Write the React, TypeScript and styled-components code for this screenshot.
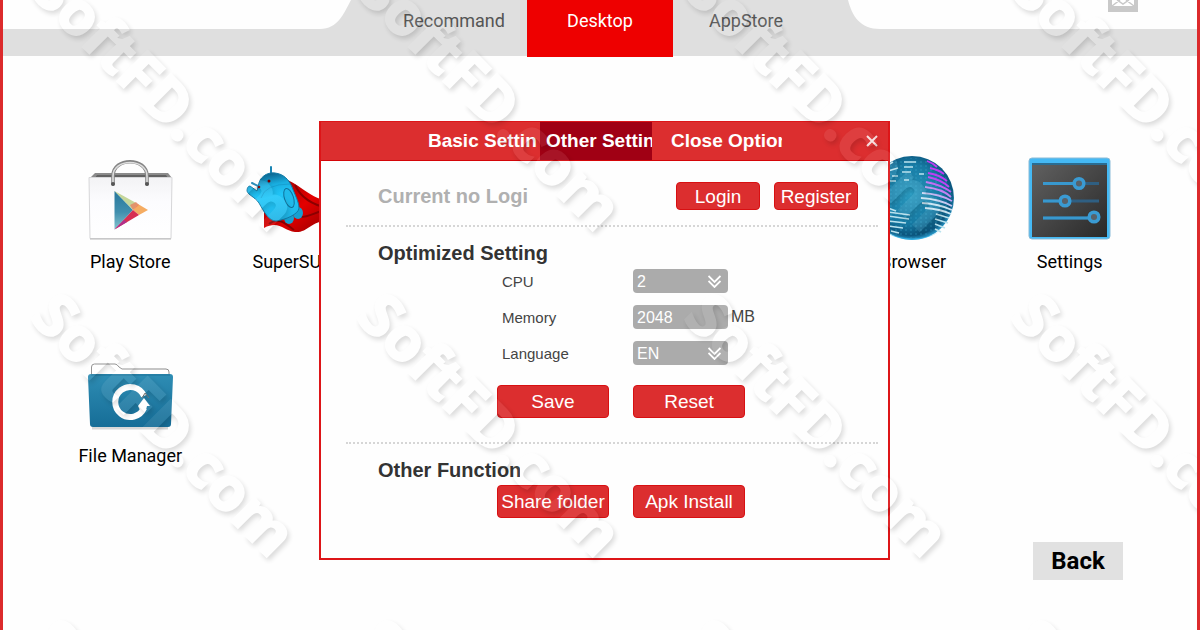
import React from "react";
import styled, { createGlobalStyle } from "styled-components";

const GlobalStyle = createGlobalStyle`
  *, *::before, *::after { box-sizing: border-box; }
  body { margin: 0; background: #fefefe; }
  button, input, select { font: inherit; }
`;

const Page = styled.div`
  position: relative;
  display: flex;
  flex-direction: column;
  min-height: 100vh;
  overflow: hidden;
  border: solid #dc2a2c;
  border-width: 0 3px;
  background: #fefefe;
  font-family: Roboto, "Liberation Sans", sans-serif;
  font-size: 18px;
  line-height: 24px;
  color: #000;
`;

const TopBar = styled.header`
  display: grid;
  grid-template-columns: 1fr auto 1fr;
  height: 56px;
  background: #dfdfdf;
`;

const SidePanel = styled.div<{ $end?: boolean }>`
  display: flex;
  flex-direction: ${(p) => (p.$end ? "row-reverse" : "row")};
  height: 29px;
  padding: ${(p) => (p.$end ? "0 0 0 29px" : "0 29px 0 0")};
`;

const PanelFill = styled.div`
  display: flex;
  flex: 1;
  justify-content: flex-end;
  padding-right: 59px;
  background: #fefefe;
`;

const MailButton = styled.button`
  width: 30px;
  height: 12px;
  padding: 0;
  border: 0;
  background: none;

  svg { display: block; }
`;

const Nav = styled.nav`
  display: flex;
`;

const NavLink = styled.a<{ $active?: boolean }>`
  width: 146px;
  height: 57px;
  padding-top: 9px;
  text-align: center;
  text-decoration: none;
  color: ${(p) => (p.$active ? "#fff" : "#555")};
  background: ${(p) => (p.$active ? "#ee0000" : "transparent")};
`;

const AppGrid = styled.main`
  display: grid;
  grid-template-columns: repeat(7, 1fr);
  grid-auto-rows: 170px;
  row-gap: 24px;
  padding: 100px 49px 0;
`;

const AppLink = styled.a<{ $column?: number }>`
  display: flex;
  flex-direction: column;
  align-items: center;
  grid-column: ${(p) => p.$column ?? "auto"};
  text-decoration: none;
  color: #000;

  svg { display: block; margin-bottom: 2px; }
`;

const BackButton = styled.button`
  align-self: flex-end;
  width: 90px;
  height: 38px;
  margin: auto 74px 50px 0;
  padding: 0;
  border: 0;
  background: #e1e1e1;
  font-size: 24px;
  font-weight: 700;
  color: #000;
`;

const Dialog = styled.section`
  position: absolute;
  top: 121px;
  left: 50%;
  width: 571px;
  margin-left: -281px;
  padding-bottom: 40px;
  border: 2px solid #dd1518;
  border-top-width: 1px;
  background: #fefefe;
  font-family: "Liberation Sans", Arial, sans-serif;
`;

const DialogBar = styled.div`
  display: flex;
  align-items: center;
  height: 39px;
  padding: 0 10px 0 107px;
  border-bottom: 1px solid #d40508;
  background: #dc2e2f;
`;

const DialogTab = styled.button<{ $active?: boolean; $wide?: boolean }>`
  width: ${(p) => (p.$wide ? 130 : 112)}px;
  height: 38px;
  padding: 0;
  border: 0;
  color: #fff;
  background: ${(p) => (p.$active ? "#a00014" : "transparent")};

  span {
    display: block;
    margin-left: ${(p) => (p.$wide ? 19 : p.$active ? 6 : 0)}px;
    overflow: hidden;
    white-space: nowrap;
    text-align: left;
    font-size: 19px;
    font-weight: 700;
  }
`;

const CloseButton = styled.button`
  display: flex;
  margin-left: auto;
  padding: 0;
  border: 0;
  background: none;
`;

const Section = styled.div<{ $ruled?: boolean }>`
  margin: 0 10px 0 25px;
  padding-left: 32px;
  border-bottom: ${(p) => (p.$ruled ? "2px dotted #d6d6d6" : "0")};
`;

const AccountRow = styled.div`
  display: flex;
  align-items: center;
  gap: 14px;
  height: 64px;
  padding: 6px 20px 0 0;
`;

const Heading = styled.h2<{ $muted?: boolean }>`
  flex: 1;
  margin: 0;
  font-size: 20px;
  font-weight: 700;
  line-height: 24px;
  color: ${(p) => (p.$muted ? "#b0b0b0" : "#333")};
`;

const ClippedHeading = styled(Heading)`
  width: 142px;
  overflow: hidden;
  white-space: nowrap;
`;

const RedButton = styled.button<{ $small?: boolean }>`
  width: ${(p) => (p.$small ? 84 : 112)}px;
  height: ${(p) => (p.$small ? 28 : 33)}px;
  padding: ${(p) => (p.$small ? "2px 0 0" : "0")};
  border: 1px solid #d81012;
  border-radius: 4px;
  background: #dc2e2f;
  font-size: 19px;
  line-height: 24px;
  white-space: nowrap;
  color: #fff;
`;

const Settings = styled.form`
  padding: 14px 0 24px;
`;

const Fields = styled.div`
  display: grid;
  gap: 12px;
  margin: 4px 0 20px 124px;
`;

const Field = styled.div`
  display: flex;
  align-items: center;
  height: 24px;
  font-size: 16px;
  color: #444;
`;

const FieldLabel = styled.label`
  width: 131px;
  padding-top: 2px;
  font-size: 15px;
`;

const SelectBox = styled.div`
  position: relative;

  svg {
    position: absolute;
    top: 6px;
    right: 10px;
    pointer-events: none;
  }
`;

const controlStyle = `
  display: block;
  width: 95px;
  height: 24px;
  margin: 0 3px 0 0;
  padding: 1px 4px 0;
  border: 0;
  border-radius: 4px;
  appearance: none;
  background: #ababab;
  color: #fff;
`;

const Select = styled.select`${controlStyle}`;
const TextInput = styled.input`${controlStyle}`;

const ButtonRow = styled.div`
  display: flex;
  gap: 24px;
  padding-left: 119px;
`;

const Functions = styled.div`
  padding: 14px 0 0;

  ${ButtonRow} { padding-top: 3px; }
`;

const WatermarkLayer = styled.svg`
  position: absolute;
  inset: 0;
  width: 100%;
  height: 100%;
  pointer-events: none;
  user-select: none;
  font-family: "Open Sans", "Noto Sans", sans-serif;
  font-size: 60px;
  font-weight: 700;
`;

function PlayStoreIcon() {
  return (
    <svg width="88" height="92" viewBox="-1 0 88 92" aria-hidden="true">
      <defs>
        <linearGradient id="bag" x1="0" y1="0" x2="0" y2="1">
          <stop offset="0" stopColor="#f3f3f5" /><stop offset=".4" stopColor="#fcfcfe" /><stop offset="1" stopColor="#fff" />
        </linearGradient>
        <linearGradient id="playBlue" x1="0" y1="0" x2="0" y2="1">
          <stop offset="0" stopColor="#27779c" /><stop offset=".55" stopColor="#418fae" /><stop offset="1" stopColor="#84c3cf" />
        </linearGradient>
      </defs>
      <path d="M8 17h73l4 5H3z" fill="#8b8b8b" />
      <path d="M10 19h69l2 3H8z" fill="#626262" />
      <path d="M2 21.500h83l-1 61H3z" fill="url(#bag)" stroke="#d7d7d9" />
      <path d="M3 83h81" stroke="#b9b9b9" />
      <path d="M26 28V20C26 1 60 1 60 20v8" fill="none" stroke="#858585" strokeWidth="3.600" strokeLinecap="round" />
      <path d="M26 27V20C26 2 60 2 60 20v7" fill="none" stroke="#dedede" strokeWidth="1.600" />
      <circle cx="26" cy="28" r="2" fill="#555" /><circle cx="60" cy="28" r="2" fill="#555" />
      <path d="M27.500 35v38.500L46 54z" fill="url(#playBlue)" />
      <path d="M27.500 35L51 48l-5 6z" fill="#c5d69a" />
      <path d="M51 48l10 6-9 5-6-5z" fill="#f5ac62" />
      <path d="M46 54l-3-5 6-3 3 3z" fill="#ed7658" opacity=".7" />
      <path d="M27.500 73.500L46 54l6 5z" fill="#d72f52" />
      <path d="M27.500 73.500L37 64l3 2z" fill="#b0308c" />
    </svg>
  );
}

function SuperSuIcon() {
  return (
    <svg width="88" height="92" viewBox="-4 1 88 92" aria-hidden="true">
      <defs>
        <linearGradient id="cape" x1="0" y1="0" x2="1" y2="1">
          <stop offset="0" stopColor="#8b0000" /><stop offset=".55" stopColor="#e40000" /><stop offset="1" stopColor="#930000" />
        </linearGradient>
        <linearGradient id="droid" x1=".4" y1="0" x2=".6" y2="1">
          <stop offset="0" stopColor="#0a5f89" /><stop offset=".25" stopColor="#19aee0" /><stop offset=".5" stopColor="#22c8fa" /><stop offset="1" stopColor="#1fb4e6" />
        </linearGradient>
      </defs>
      <path d="M36 24c14 2 24 18 45 22v20c-16-1-20 12-33 11-11-1-16-12-31-4V47z" fill="url(#cape)" />
      <path d="M48 30c6 13 18 20 33 23M52 62c10 1 19-7 29-7M22 69c9-8 17 0 25 6" fill="none" stroke="#8b0000" strokeWidth="2" />
      <ellipse cx="42" cy="63" rx="5" ry="6" fill="#17a0d0" /><ellipse cx="51" cy="58" rx="5" ry="6" fill="#17a0d0" />
      <path d="M24 12v8M5 28l8 4" stroke="#1984b3" strokeWidth="2" strokeLinecap="round" />
      <path d="M11 32C12 22 20 17 28 18c9 1 14 7 17 14 3 8 7 15 7 21 0 6-14 12-23 13-7 0-12-9-17-18C8 42 1 40 0 36c0-3 1-5 3-5l7 5z" fill="url(#droid)" stroke="#117aa6" />
      <path d="M14 43q4-14 29-14" fill="none" stroke="#138dbd" opacity=".5" />
      <ellipse cx="42" cy="43" rx="4.500" ry="10" transform="rotate(-18 42 43)" fill="#20baea" stroke="#11719a" />
      <circle cx="22" cy="26" r="1.500" fill="#700" /><circle cx="12" cy="32" r="1.300" fill="#700" />
    </svg>
  );
}

function BrowserIcon() {
  return (
    <svg width="88" height="92" viewBox="-1 0 88 92" aria-hidden="true">
      <defs>
        <radialGradient id="globe" cx=".48" cy=".45" r=".55">
          <stop offset="0" stopColor="#2b9bc1" /><stop offset=".65" stopColor="#1679a2" /><stop offset=".9" stopColor="#0b557d" /><stop offset="1" stopColor="#2b9bcb" />
        </radialGradient>
        <linearGradient id="land" gradientUnits="userSpaceOnUse" x1="60" y1="46" x2="74" y2="20">
          <stop offset=".1" stopColor="#c8e4f2" /><stop offset=".8" stopColor="#c03cf4" />
        </linearGradient>
        <pattern id="dots" width="5" height="4" patternUnits="userSpaceOnUse"><path d="M0 2h2" stroke="#39afd5" opacity=".45" /></pattern>
      </defs>
      <circle cx="42" cy="42" r="42" fill="url(#globe)" />
      <circle cx="42" cy="42" r="40" fill="url(#dots)" />
      <path d="M15 76q28 13 54 0-14 8-27 8t-27-8" fill="#36b6ed" opacity=".7" />
      <g fill="none" stroke="url(#land)" strokeWidth="1.800">
        <path d="M57 5q6 2 10 6M60 12q9 2 14 6M58 17q12 2 19 8M58 21q14 3 21 10M56 26q16 3 25 10M55 31q18 2 26 10" />
        <path d="M52 37q18 1 30 8M51 42q18 1 31 8M52 47q17 1 30 7M55 52q15 1 26 6" />
      </g>
      <g fill="none" stroke="#b9e2ee" strokeWidth="1.700">
        <path d="M66 58l13 4M65 63l13 4M65 68l10 4M65 73l6 3M18 15l10-3M34 11h9M32 16h9M22 20h6M17 25h9M34 24h5M16 10l7-4M49 18h5M34 6h12" />
        <path d="M18 52l8 3M18 56l22 3M18 60l21 3M18 65l18 2M18 70l15 2M21 75l8 2" />
      </g>
    </svg>
  );
}

function SettingsIcon() {
  return (
    <svg width="88" height="92" viewBox="0 0 88 92" aria-hidden="true">
      <defs>
        <linearGradient id="board" x1="0" y1="0" x2="1" y2="1">
          <stop offset="0" stopColor="#606060" /><stop offset=".5" stopColor="#454545" /><stop offset="1" stopColor="#292929" />
        </linearGradient>
      </defs>
      <rect x="3" y="2" width="81" height="81" rx="3" fill="#45b9f4" stroke="#8bbcd7" />
      <path d="M6 8h75v73H6z" fill="url(#board)" />
      <path d="M6 8h75" stroke="#2a6c91" strokeWidth="2" />
      <g strokeWidth="3">
        <path d="M17 27.500h56M17 45h56M17 62h56" stroke="#2f5f82" />
        <path d="M17 27.500h35M17 45h22M17 62h50" stroke="#3898ce" />
      </g>
      <g fill="#59626a" stroke="#3a9bd3" strokeWidth="3.500">
        <circle cx="53" cy="27.500" r="4.800" /><circle cx="39" cy="45" r="4.800" /><circle cx="68" cy="61" r="4.800" />
      </g>
    </svg>
  );
}

function FileManagerIcon() {
  return (
    <svg width="88" height="92" viewBox="-1 0 88 92" aria-hidden="true">
      <defs>
        <linearGradient id="folder" x1="0" y1="0" x2="0" y2="1">
          <stop offset="0" stopColor="#2e8db4" /><stop offset="1" stopColor="#166d97" />
        </linearGradient>
      </defs>
      <path d="M4.500 27V17q0-3 3-3H28q2 0 4 3l3 2h44q3 0 3 3v6" fill="#fff" stroke="#8c8c8c" />
      <path d="M5 78h76" stroke="#d8d8d8" strokeWidth="3" />
      <path d="M4 24h79q3 0 3 3l-2 47q0 3-3 3H6q-3 0-3-3L1 27q0-3 3-3z" fill="url(#folder)" />
      <path d="M4 25h79" stroke="#1f7299" />
      <path d="M57 46a15 15 0 1 0 0 12" fill="none" stroke="#fff" strokeWidth="6" />
      <path d="M51 56l6-8 6 8h-3l-1 4h-6z" fill="#fff" />
      <path d="M55 48l3-5 4 5" fill="none" stroke="#777" />
    </svg>
  );
}

function MailIcon() {
  return (
    <svg width="30" height="12" viewBox="0 0 30 12" aria-hidden="true">
      <path d="M0 0h30v12H0z" fill="#c9c9c9" />
      <path d="M4 0h22v6H4z" fill="#fff" />
      <path d="M4 6l8-6M26 6l-8-6M9 0l6 4 6-4" fill="none" stroke="#c9c9c9" strokeWidth="1.500" />
    </svg>
  );
}

function CloseIcon() {
  return (
    <svg width="12" height="12" viewBox="0 0 12 12" aria-hidden="true">
      <path d="M1 1l10 10M11 1L1 11" stroke="#f8dede" strokeWidth="2" />
    </svg>
  );
}

function DoubleChevron() {
  return (
    <svg width="13" height="13" viewBox="0 0 13 13" aria-hidden="true">
      <path d="M.5 1l6 6 6-6M.5 6l6 6 6-6" fill="none" stroke="#fff" strokeWidth="1.800" />
    </svg>
  );
}

function Watermark() {
  const columns = [26, 352, 679, 1006];
  const rows = [-7, 319, 645];
  return (
    <WatermarkLayer aria-hidden="true">
      <defs>
        <filter id="emboss" x="-5%" y="-10%" width="115%" height="125%" colorInterpolationFilters="sRGB">
          <feOffset in="SourceAlpha" dx="2" dy="3" result="moved" />
          <feGaussianBlur in="moved" stdDeviation="2.500" result="soft" />
          <feComposite in="soft" in2="SourceAlpha" operator="out" result="outer" />
          <feComponentTransfer in="outer" result="shadow"><feFuncA type="linear" slope=".14" /></feComponentTransfer>
          <feFlood floodColor="#fff" floodOpacity=".08" />
          <feComposite in2="SourceAlpha" operator="in" result="face" />
          <feMerge><feMergeNode in="shadow" /><feMergeNode in="face" /></feMerge>
        </filter>
      </defs>
      {rows.map((y) => (
        <g key={y} filter="url(#emboss)" stroke="#000" strokeWidth="2">
          {columns.map((x) => (
            <text key={x} transform={`translate(${x} ${y}) rotate(45)`}>SoftFD.com</text>
          ))}
        </g>
      ))}
    </WatermarkLayer>
  );
}

export default function App() {
  return (
    <Page>
      <GlobalStyle />
      <TopBar>
        <SidePanel>
          <PanelFill />
          <svg width="32" height="29" viewBox="0 0 32 29" aria-hidden="true">
            <path d="M0 0H31C24 13 18 29 0 29z" fill="#fefefe" />
          </svg>
        </SidePanel>
        <Nav aria-label="Main">
          <NavLink href="#recommand">Recommand</NavLink>
          <NavLink href="#desktop" $active aria-current="page">Desktop</NavLink>
          <NavLink href="#appstore">AppStore</NavLink>
        </Nav>
        <SidePanel $end>
          <PanelFill>
            <MailButton type="button" aria-label="Mail"><MailIcon /></MailButton>
          </PanelFill>
          <svg width="32" height="29" viewBox="0 0 32 29" aria-hidden="true">
            <path d="M32 0H0C4 16 12 29 32 29z" fill="#fefefe" />
          </svg>
        </SidePanel>
      </TopBar>

      <AppGrid>
        <AppLink href="#play-store"><PlayStoreIcon />Play Store</AppLink>
        <AppLink href="#supersu"><SuperSuIcon />SuperSU</AppLink>
        <AppLink href="#browser" $column={6}><BrowserIcon />Browser</AppLink>
        <AppLink href="#settings"><SettingsIcon />Settings</AppLink>
        <AppLink href="#file-manager"><FileManagerIcon />File Manager</AppLink>
      </AppGrid>

      <BackButton type="button">Back</BackButton>

      <Dialog role="dialog" aria-label="Settings">
        <DialogBar>
          <DialogTab type="button"><span>Basic Settin</span></DialogTab>
          <DialogTab type="button" $active><span>Other Settin</span></DialogTab>
          <DialogTab type="button" $wide><span>Close Option</span></DialogTab>
          <CloseButton type="button" aria-label="Close"><CloseIcon /></CloseButton>
        </DialogBar>

        <Section $ruled>
          <AccountRow>
            <Heading $muted>Current no Logi</Heading>
            <RedButton type="button" $small>Login</RedButton>
            <RedButton type="button" $small>Register</RedButton>
          </AccountRow>
        </Section>

        <Section $ruled>
          <Settings onSubmit={(e) => e.preventDefault()}>
            <Heading>Optimized Setting</Heading>
            <Fields>
              <Field>
                <FieldLabel htmlFor="cpu">CPU</FieldLabel>
                <SelectBox>
                  <Select id="cpu" defaultValue="2"><option>1</option><option>2</option><option>4</option></Select>
                  <DoubleChevron />
                </SelectBox>
              </Field>
              <Field>
                <FieldLabel htmlFor="memory">Memory</FieldLabel>
                <TextInput id="memory" defaultValue="2048" />
                <span>MB</span>
              </Field>
              <Field>
                <FieldLabel htmlFor="language">Language</FieldLabel>
                <SelectBox>
                  <Select id="language" defaultValue="EN"><option>EN</option></Select>
                  <DoubleChevron />
                </SelectBox>
              </Field>
            </Fields>
            <ButtonRow>
              <RedButton type="submit">Save</RedButton>
              <RedButton type="reset">Reset</RedButton>
            </ButtonRow>
          </Settings>
        </Section>

        <Section>
          <Functions>
            <ClippedHeading>Other Function</ClippedHeading>
            <ButtonRow>
              <RedButton type="button">Share folder</RedButton>
              <RedButton type="button">Apk Install</RedButton>
            </ButtonRow>
          </Functions>
        </Section>
      </Dialog>

      <Watermark />
    </Page>
  );
}
